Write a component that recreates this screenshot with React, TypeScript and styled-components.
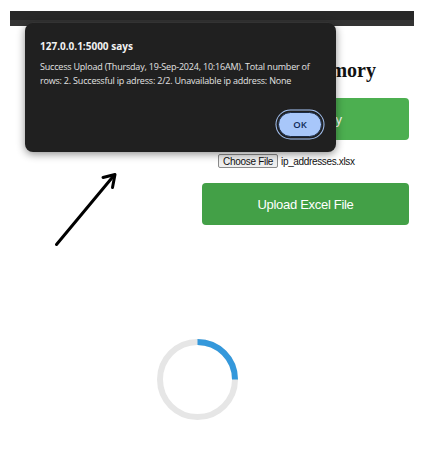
import React from "react";
import styled, { createGlobalStyle } from "styled-components";

const GlobalStyle = createGlobalStyle`
  html, body { margin: 0; padding: 0; background: #ffffff; }
  body { font-family: "Liberation Sans", Arial, sans-serif; }
  #root { position: relative; min-height: 462px; }
`;

const Page = styled.div`
  position: relative;
  width: 421px;
  height: 462px;
  overflow: hidden;
`;

const TopBar = styled.div`
  margin: 11px 7px 0 10px;
  height: 15px;
  background: linear-gradient(#272727 0 62%, #333333 62% 100%);
`;

const Main = styled.main`
  display: flex;
  flex-direction: column;
  width: 207px;
  margin-left: 202px;
`;

const Heading = styled.h1`
  margin: 32px 0 0;
  padding-right: 33px;
  font-family: "Liberation Serif", "Times New Roman", serif;
  font-weight: bold;
  font-size: 20px;
  line-height: 24px;
  text-align: right;
  color: #111;
`;

const GreenButton = styled.button<{ $tone: string; $top: number; $shift?: number }>`
  margin-top: ${(p) => p.$top}px;
  height: 42px;
  width: 100%;
  padding: 0 ${(p) => (p.$shift ?? 0) * 2}px 0 0;
  border: none;
  border-radius: 4px;
  background: ${(p) => p.$tone};
  color: #ffffff;
  font-family: "Liberation Sans", Arial, sans-serif;
  font-size: 13px;
  letter-spacing: -0.3px;
  cursor: pointer;
`;

const FileRow = styled.div`
  display: flex;
  align-items: center;
  gap: 3px;
  margin: 14px 0 0 16px;
  height: 14px;
`;

const FileButton = styled.span`
  display: inline-flex;
  align-items: center;
  height: 12px;
  padding: 0 4px;
  border: 1px solid #8a8a8a;
  border-radius: 2px;
  background: #efefef;
  font-size: 10px;
  letter-spacing: -0.3px;
  color: #111;
`;

const FileName = styled.span`
  font-size: 10px;
  letter-spacing: -0.35px;
  color: #111;
`;

const SpinnerWrap = styled.div`
  margin: 114px 0 0 157px;
  width: 81px;
  height: 81px;
`;

const Dialog = styled.div`
  position: absolute;
  left: 25px;
  top: 23px;
  width: 311px;
  height: 129px;
  box-sizing: border-box;
  padding: 16px 12px 13px 15px;
  background: #202020;
  border-radius: 8px;
  box-shadow: 0 2px 8px rgba(0, 0, 0, 0.45), 0 0 0 1px rgba(255, 255, 255, 0.04);
  display: flex;
  flex-direction: column;
  font-family: "Open Sans", "Noto Sans", sans-serif;
`;

const DialogTitle = styled.div`
  font-size: 10px;
  font-weight: 700;
  line-height: 14px;
  color: #f2f2f2;
`;

const DialogBody = styled.div`
  margin-top: 7px;
  font-size: 9px;
  line-height: 14px;
  color: #e3e3e3;
  letter-spacing: -0.2px;
`;

const DialogActions = styled.div`
  margin-top: auto;
  display: flex;
  justify-content: flex-end;
`;

const OkButton = styled.button`
  width: 44px;
  height: 25px;
  margin: 2px;
  padding: 0;
  border: 1px solid #1a2a45;
  border-radius: 999px;
  background: #a8c7fa;
  color: #0f2a57;
  font-family: "Open Sans", "Noto Sans", sans-serif;
  font-size: 9.5px;
  font-weight: 600;
  box-shadow: 0 0 0 1.5px #202020, 0 0 0 2.5px #a8c7fa;
`;

const ArrowSvg = styled.svg`
  position: absolute;
  left: 50px;
  top: 170px;
`;

export default function App() {
  return (
    <Page>
      <GlobalStyle />
      <TopBar />
      <Main>
        <Heading>IP Memory</Heading>
        <GreenButton $tone="#4caf50" $top={16} $shift={2}>Add Inventory</GreenButton>
        <FileRow>
          <FileButton>Choose File</FileButton>
          <FileName>ip_addresses.xlsx</FileName>
        </FileRow>
        <GreenButton $tone="#43a047" $top={15}>Upload Excel File</GreenButton>
      </Main>
      <SpinnerWrap>
        <svg width="81" height="81" viewBox="0 0 81 81">
          <circle cx="40.5" cy="40.5" r="37.5" fill="none" stroke="#e6e6e6" strokeWidth="6" />
          <path d="M 40.5 3 A 37.5 37.5 0 0 1 78 40.5" fill="none" stroke="#3498db" strokeWidth="6" />
        </svg>
      </SpinnerWrap>
      <ArrowSvg width="72" height="80" viewBox="0 0 72 80">
        <line x1="6.5" y1="74.5" x2="63.5" y2="6" stroke="#000" strokeWidth="3" strokeLinecap="round" />
        <polyline points="53,7.5 65,4.5 62.5,17.5" fill="none" stroke="#000" strokeWidth="3" strokeLinecap="round" strokeLinejoin="round" />
      </ArrowSvg>
      <Dialog>
        <DialogTitle>127.0.0.1:5000 says</DialogTitle>
        <DialogBody>
          Success Upload (Thursday, 19-Sep-2024, 10:16AM). Total number of
          <br />
          rows: 2. Successful ip adress: 2/2. Unavailable ip address: None
        </DialogBody>
        <DialogActions>
          <OkButton>OK</OkButton>
        </DialogActions>
      </Dialog>
    </Page>
  );
}
